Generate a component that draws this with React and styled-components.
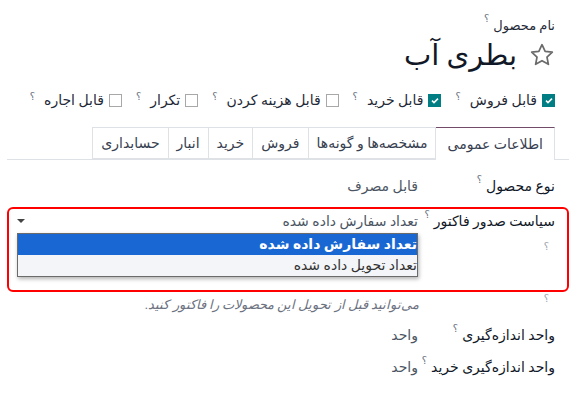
import React from 'react'
import styled, { createGlobalStyle } from 'styled-components'

const Global = createGlobalStyle`
  body {
    margin: 0;
    background: #fff;
    font-family: Roboto, "DejaVu Sans", sans-serif;
    color: #374151;
  }
`

const Sheet = styled.div`
  direction: rtl;
  width: 562px;
  padding: 17px 7px 0 7px;
  font-size: 14px;
`

const Head = styled.div`
  padding-right: 14px;
`

const Help = styled.sup`
  font-size: 10px;
  color: #6b7280;
  margin-right: 4px;
  vertical-align: top;
  position: relative;
  top: -3px;
  line-height: 1;
`

const SmallLabel = styled.div`
  font-size: 13px;
  color: #1f2937;
  line-height: 18px;
`

const TitleRow = styled.div`
  display: flex;
  align-items: center;
  gap: 12px;
  height: 42px;
  margin-top: -1px;
`

const Title = styled.h1`
  margin: 0;
  font-size: 29px;
  font-weight: 400;
  color: #111827;
`

const Options = styled.div`
  display: flex;
  align-items: center;
  gap: 14px;
  height: 24px;
  margin-top: 12px;
`

const Option = styled.label`
  display: flex;
  align-items: center;
  gap: 5px;
  font-size: 14px;
  color: #1f2937;
`

const Box = styled.span`
  width: 13px;
  height: 13px;
  box-sizing: border-box;
  border: 1px solid ${p => (p.$on ? '#017e84' : '#a8a8a8')};
  background: ${p => (p.$on ? '#017e84' : '#fff')};
  display: flex;
  align-items: center;
  justify-content: center;
`

const Tabs = styled.div`
  display: flex;
  margin-top: 15px;
  padding-right: 14px;
  border-bottom: 1px solid #dee2e6;
  height: 32px;
`

const Tab = styled.div`
  padding: 0 ${p => (p.$active ? '11px' : '8px')};
  display: flex;
  align-items: center;
  font-size: 14px;
  color: #374151;
  border: 1px solid #dee2e6;
  border-top: ${p => (p.$active ? '1px solid #714b67' : '1px solid #dee2e6')};
  margin-left: -1px;
  margin-bottom: ${p => (p.$active ? '-1px' : '0')};
  background: #fff;
  border-bottom: ${p => (p.$active ? 'none' : '1px solid #dee2e6')};
`

const Row = styled.div`
  display: flex;
  align-items: center;
  height: ${p => p.$h || '32px'};
  padding-right: ${p => p.$pad || '14px'};
  margin-top: ${p => p.$mt || '0'};
  position: relative;
`

const Label = styled.div`
  width: 137px;
  flex: none;
  color: #111827;
  font-weight: 500;
  white-space: nowrap;
`

const Value = styled.div`
  flex: 1;
  color: #4b5563;
`

const Frame = styled.div`
  border: 2px solid #f00;
  border-radius: 6px;
  padding: 0 12px 0 8px;
  margin-top: 5px;
  height: 81px;
`

const Select = styled.div`
  position: relative;
  flex: 1;
  height: 24px;
  border-bottom: 1px solid #017e84;
  display: flex;
  align-items: center;
  justify-content: space-between;
  color: #4b5563;
  align-self: flex-start;
`

const Caret = styled.span`
  width: 0;
  height: 0;
  border-left: 4px solid transparent;
  border-right: 4px solid transparent;
  border-top: 4px solid #444;
`

const Menu = styled.ul`
  position: absolute;
  top: 24px;
  left: 0;
  right: 0;
  margin: 0;
  padding: 0;
  list-style: none;
  background: #f4f5f8;
  border: 1px solid #6b6b6b;
  box-shadow: 1px 2px 4px rgba(0, 0, 0, 0.3);
  z-index: 2;
`

const Item = styled.li`
  height: 21px;
  line-height: 21px;
  font-size: 14px;
  background: ${p => (p.$sel ? '#1967d2' : '#f4f5f8')};
  color: ${p => (p.$sel ? '#fff' : '#333')};
  font-weight: ${p => (p.$sel ? 600 : 400)};
`

const HelpRow = styled.div`
  display: flex;
  height: ${p => p.$h || '30px'};
  padding-right: ${p => p.$right || '6px'};
  font-size: 10px;
  color: #9ca3af;
  padding-top: ${p => p.$top || '0'};
`

const Hint = styled.div`
  font-style: italic;
  color: #6b7280;
  font-size: 13px;
  padding-right: 150px;
  margin-top: -10px;
  height: 20px;
`

const Star = () => (
  <svg width="26" height="26" viewBox="0 0 24 24" fill="none" stroke="#6b6b6b" strokeWidth="1.6" strokeLinejoin="round">
    <path d="M12 2.5l2.9 6.1 6.6.8-4.9 4.6 1.3 6.6L12 17.3l-5.9 3.3 1.3-6.6-4.9-4.6 6.6-.8z" />
  </svg>
)

const Check = () => (
  <svg width="8" height="7" viewBox="0 0 8 7">
    <path d="M1 3.6l2 2 4-4" stroke="#fff" strokeWidth="1.5" fill="none" />
  </svg>
)

const options = [
  { text: 'قابل فروش', on: true },
  { text: 'قابل خرید', on: true },
  { text: 'قابل هزینه کردن', on: false },
  { text: 'تکرار', on: false },
  { text: 'قابل اجاره', on: false },
]

const tabs = ['اطلاعات عمومی', 'مشخصه‌ها و گونه‌ها', 'فروش', 'خرید', 'انبار', 'حسابداری']

export default function App() {
  return (
    <>
      <Global />
      <Sheet>
        <Head>
          <SmallLabel>نام محصول<Help>؟</Help></SmallLabel>
          <TitleRow>
            <Star />
            <Title>بطری آب</Title>
          </TitleRow>
          <Options>
            {options.map(o => (
              <Option key={o.text}>
                <Box $on={o.on}>{o.on && <Check />}</Box>
                {o.text}
                <Help>؟</Help>
              </Option>
            ))}
          </Options>
        </Head>
        <Tabs>
          {tabs.map((t, i) => (
            <Tab key={t} $active={i === 0}>{t}</Tab>
          ))}
        </Tabs>
        <Row $mt="10px">
          <Label>نوع محصول<Help>؟</Help></Label>
          <Value>قابل مصرف</Value>
        </Row>
        <Frame>
          <Row $pad="0" $h="24px">
            <Label>سیاست صدور فاکتور<Help>؟</Help></Label>
            <Select>
              <span>تعداد سفارش داده شده</span>
              <Caret />
              <Menu>
                <Item $sel>تعداد سفارش داده شده</Item>
                <Item>تعداد تحویل داده شده</Item>
              </Menu>
            </Select>
          </Row>
          <HelpRow $h="24px" $top="8px">؟</HelpRow>
        </Frame>
        <HelpRow $h="14px" $top="1px" $right="20px">؟</HelpRow>
        <Hint>می‌توانید قبل از تحویل این محصولات را فاکتور کنید.</Hint>
        <Row $mt="2px">
          <Label>واحد اندازه‌گیری<Help>؟</Help></Label>
          <Value>واحد</Value>
        </Row>
        <Row>
          <Label>واحد اندازه‌گیری خرید<Help>؟</Help></Label>
          <Value>واحد</Value>
        </Row>
      </Sheet>
    </>
  )
}
